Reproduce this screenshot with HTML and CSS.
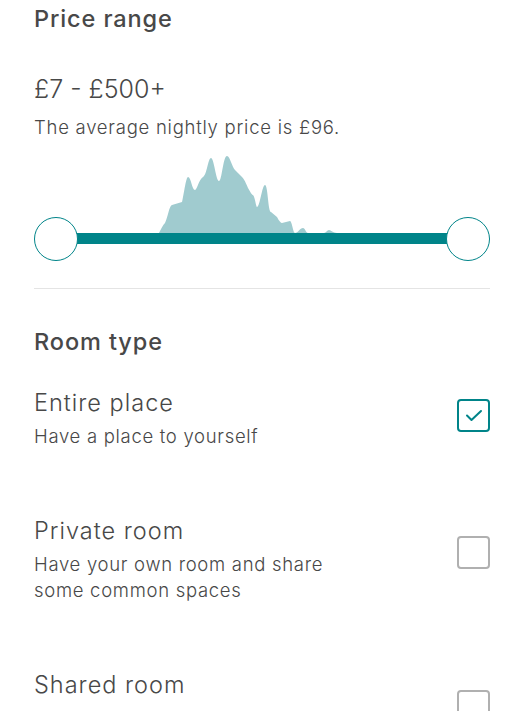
FILE: index.html
```html
<!DOCTYPE html>
<html lang="en">
<head>
    <meta charset="UTF-8">
    <meta name="viewport" content="width=device-width, initial-scale=1.0">
    <title>Filters</title>
    <link rel="stylesheet" href="styles.css">
</head>
<body>
    <section class="section price">
        <h2 class="section-title">Price range</h2>
        <p class="price-value">£7 - £500+</p>
        <p class="price-note">The average nightly price is £96.</p>

        <div class="slider">
            <svg class="histogram" width="456" height="80" viewBox="0 0 456 80">
                <path d="M125 80 C127 76 129 72 131 70 C134 64 135 53 138 52 L148 49 C150 40 152 24 154 24 C157 24 158 37 161 37 C163 37 165 26 169 24 C173 22 174 5 177 5 C180 5 182 28 185 28 C188 28 189 3 193 3 C196 3 198 14 201 17 L208 24 C211 27 213 33 214 35 C217 40 218 42 219 42 C221 44 222 54 223 54 C226 54 228 32 231 32 C234 32 234 59 237 59 L243 64 C245 68 247 70 248 70 L256 68 C258 68 259 80 261 80 C264 80 266 75 269 75 C271 75 272 80 274 80 L290 80 C292 80 293 77 295 77 C297 77 299 80 303 80 Z" fill="#a0cbcf"/>
            </svg>
            <div class="track"></div>
            <span class="handle handle-left"></span>
            <span class="handle handle-right"></span>
        </div>
    </section>

    <section class="section rooms">
        <h2 class="section-title">Room type</h2>

        <label class="room">
            <div class="room-text">
                <div class="room-name">Entire place</div>
                <div class="room-desc">Have a place to yourself</div>
            </div>
            <span class="checkbox checked">
                <svg width="18" height="13" viewBox="0 0 18 13"><path d="M2 6.5 L6.5 11 L16 2" fill="none" stroke="#008489" stroke-width="2" stroke-linecap="round" stroke-linejoin="round"/></svg>
            </span>
        </label>

        <label class="room">
            <div class="room-text">
                <div class="room-name">Private room</div>
                <div class="room-desc">Have your own room and share<br>some common spaces</div>
            </div>
            <span class="checkbox"></span>
        </label>

        <label class="room">
            <div class="room-text">
                <div class="room-name">Shared room</div>
            </div>
            <span class="checkbox"></span>
        </label>
    </section>
</body>
</html>
```

FILE: styles.css
```css
body {
    margin: 0;
    font-family: Inter, Lato, sans-serif;
    color: #484848;
    background-color: #ffffff;
    overflow: hidden;
}
.section {
    margin: 0 32px 0 34px;
}
.price {
    padding-top: 4px;
    border-bottom: 1px solid #e4e4e4;
    padding-bottom: 25px;
}
.section-title {
    margin: 0;
    font-size: 23.5px;
    font-weight: 500;
    line-height: 30px;
    letter-spacing: 0.9px;
}
.price-value {
    margin: 38px 0 0;
    font-size: 25px;
    font-weight: 300;
    line-height: 34px;
}
.price-note {
    margin: 8px 0 0;
    font-size: 18.5px;
    font-weight: 300;
    line-height: 26px;
    letter-spacing: 0.75px;
}
/* histogram sits right on top of the track */
.slider {
    position: relative;
    margin-top: 13px;
    height: 110px;
}
.histogram {
    display: block;
}
.track {
    margin: 0 22px;
    height: 11px;
    background-color: #008489;
}
.handle {
    position: absolute;
    top: 64px;
    width: 42px;
    height: 42px;
    border: 1.5px solid #008489;
    border-radius: 50%;
    background-color: white;
}
.handle-left {
    left: 0;
}
.handle-right {
    right: 0;
}
.rooms {
    padding-top: 38px;
}
.room {
    display: flex;
    align-items: flex-start;
    justify-content: space-between;
    margin-top: 30px;
    margin-bottom: 66px;
}
.room-name {
    font-size: 23.5px;
    font-weight: 300;
    line-height: 32px;
    letter-spacing: 1px;
}
.room-desc {
    font-size: 18.5px;
    font-weight: 300;
    line-height: 26px;
    margin-top: 4px;
    letter-spacing: 0.7px;
}
.checkbox {
    margin-top: 21px;
    width: 29px;
    height: 29px;
    border: 2px solid #b0b0b0;
    border-radius: 4px;
    display: flex;
    align-items: center;
    justify-content: center;
    flex-shrink: 0;
}
/* the ticked box sits a little higher, level with the title */
.checkbox.checked {
    margin-top: 12px;
    border-color: #008489;
}
```
